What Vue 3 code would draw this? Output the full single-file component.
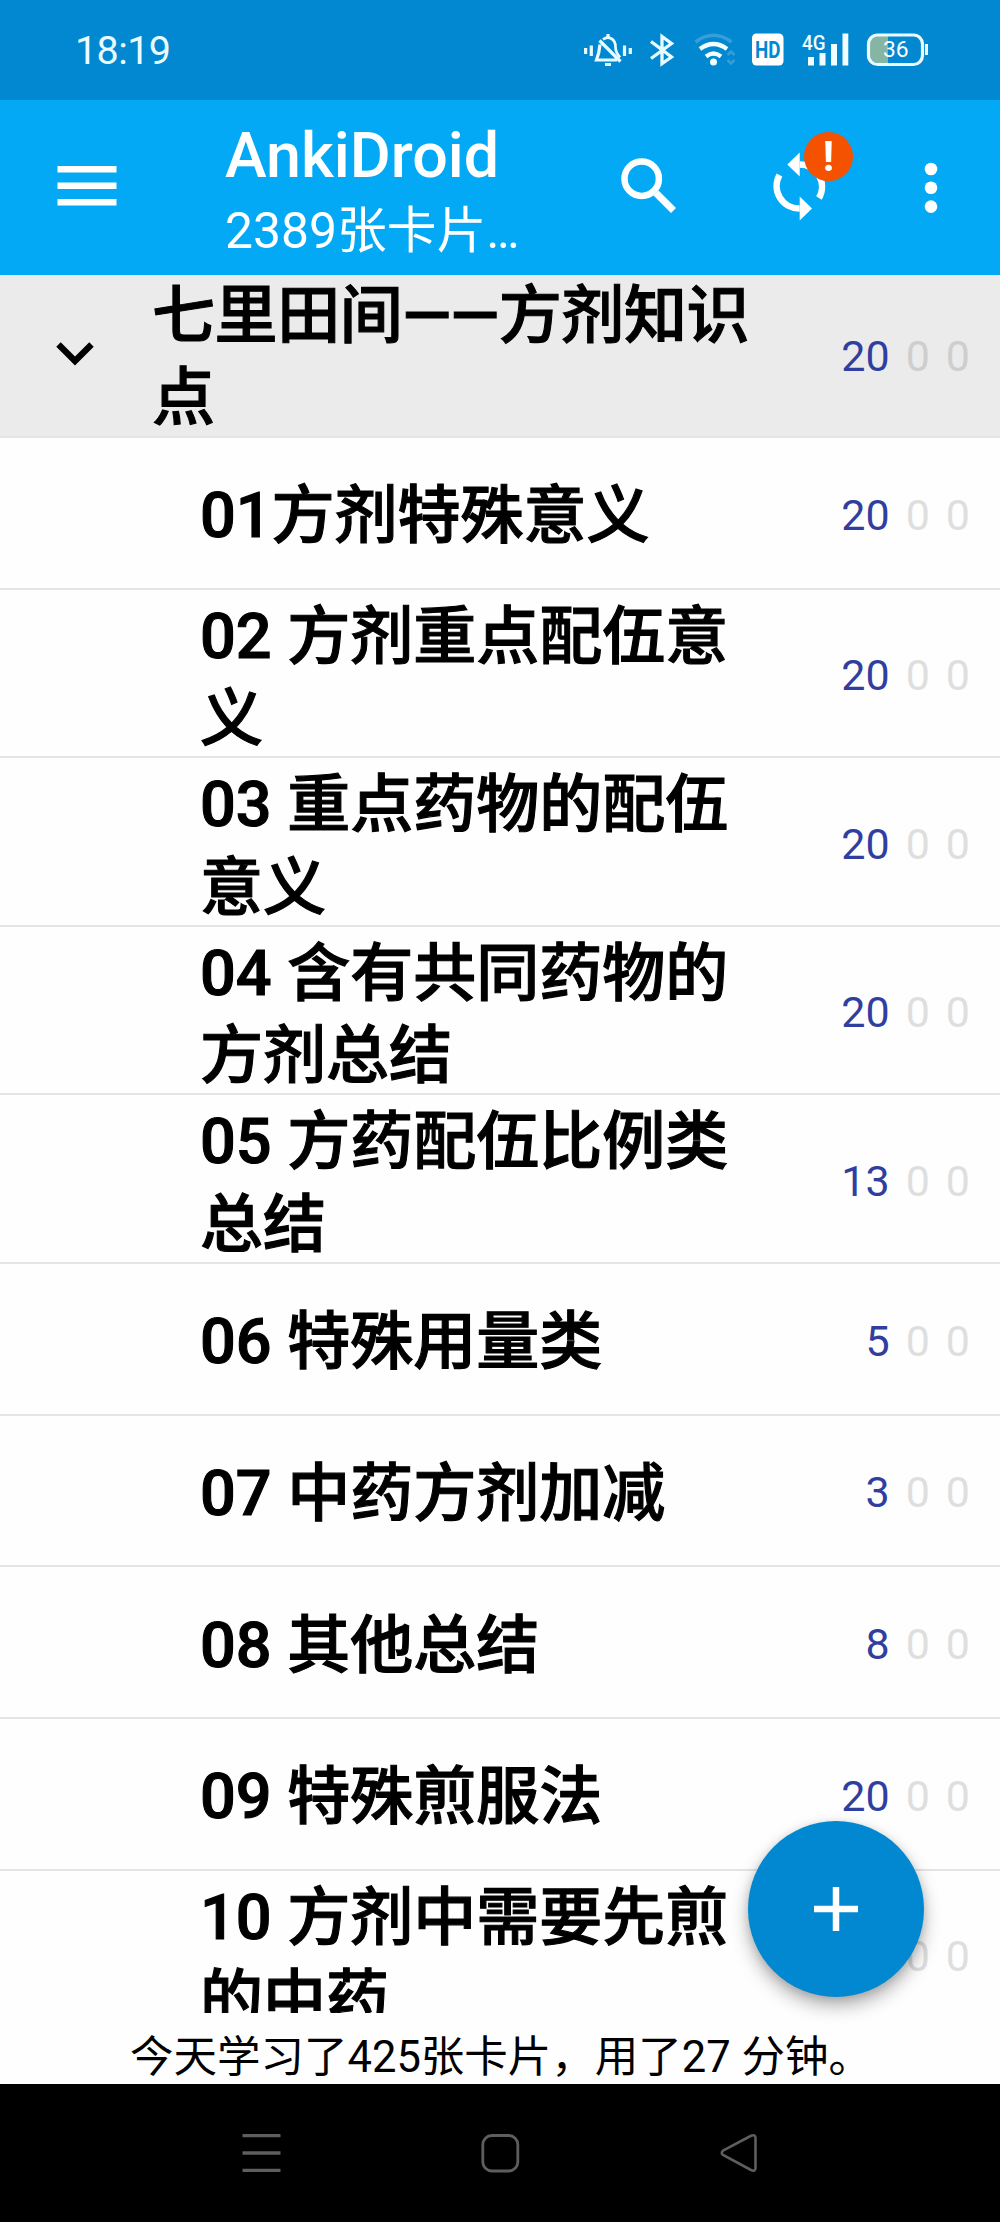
<template>
  <div class="screen">
    <div class="status-bar">
      <span class="clock">18:19</span>
      <div class="status-icons">
        <svg width="48" height="36" viewBox="584 32 48 36" fill="none" stroke="#e9fbff" stroke-width="3.2">
          <path d="M585.6 48v6M591.3 45.5v10.5M624.500 45.5v10.5M630.300 48v6" />
          <path d="M600 44.500C599.500 50 599 54 596.500 60H617M599.500 40.500L620.500 61.500" />
          <path d="M603 39.500C608 35.500 615.500 38.500 615.500 47C615.500 51 617 54 620 57.500" stroke-width="2.700" />
          <path d="M608 34v3M605 64.500h6" />
        </svg>
        <svg class="bluetooth" width="26" height="36" viewBox="649 32 26 36" fill="none" stroke="#e9fbff" stroke-width="3.300">
          <path d="M651 41.500L671.500 57L662 63.500V36.500L671.500 43.500L651 58.500" />
        </svg>
        <svg class="wifi" width="44" height="36" viewBox="694 32 44 36" fill="none" stroke="#f1fdff" stroke-width="4.200">
          <path d="M695.500 42Q713.500 28.500 731.500 42" stroke="#369edb" stroke-width="3.500" />
          <path d="M700 49Q713.500 39 727 49M706 56.500Q713.500 50.500 721 56.500" />
          <circle cx="713.500" cy="62" r="3.500" fill="#f1fdff" stroke="none" />
          <path d="M727.500 55l3.500-3.500l3.500 3.500M727.500 60l3.500 3.500l3.500-3.500" stroke="#369edb" stroke-width="2.600" />
        </svg>
        <svg class="hd" width="32" height="36" viewBox="752 32 32 36">
          <rect x="752" y="33.500" width="31.500" height="32" rx="4.500" fill="#fff" />
          <text x="755" y="57.500" textLength="25.500" lengthAdjust="spacingAndGlyphs" font-size="23" font-weight="700" fill="#0288d1">HD</text>
        </svg>
        <svg class="signal" width="48" height="36" viewBox="801 32 48 36" fill="#f1fdff">
          <text x="802" y="49.500" font-size="21" font-weight="500" textLength="23.500" lengthAdjust="spacingAndGlyphs">4G</text>
          <path d="M808 57h6v8.500h-6zM819.500 53h6v12.500h-6zM831 44h6v21.500h-6zM842.500 33.500h5.800v32h-5.800z" />
        </svg>
        <svg class="battery" width="62" height="36" viewBox="867 32 62 36">
          <path d="M888 36H878Q870 36 870 44V55Q870 63 878 63H888Z" fill="#86b5a4" />
          <rect x="868.500" y="35" width="54" height="29.500" rx="9" fill="none" stroke="#e9fbff" stroke-width="3.200" />
          <path d="M925 44h3v11h-3z" fill="#e9fbff" />
          <text x="883" y="56.700" font-size="22.800" fill="#fff">36</text>
        </svg>
      </div>
    </div>

    <header class="app-bar">
      <svg class="menu" width="60" height="42" viewBox="0 0 60 42" fill="#fff">
        <path d="M.5 1h59v6.500H.5zM.5 17.600h59v6.500H.5zM.5 34h59v6.500H.5z" />
      </svg>
      <div class="titles">
        <div class="title">AnkiDroid</div>
        <div class="subtitle">2389张卡片…</div>
      </div>
      <svg class="search" width="60" height="60" viewBox="618 156 60 60" fill="none" stroke="#fff">
        <circle cx="641.700" cy="178.700" r="17.200" stroke-width="6.500" />
        <path d="M656 193L673.500 210.500" stroke-width="7" />
      </svg>
      <div class="sync">
        <svg width="60" height="72" viewBox="770 150 60 72" fill="#fff">
          <path d="M779.500 175A22.500 22.500 0 0 0 799.700 208.500M799.700 164.500A22.300 22.300 0 0 1 819 198" fill="none" stroke="#fff" stroke-width="6.500" />
          <path d="M787.300 164.500L799.700 152.500V176.500zM812 208.500L799.700 196.500V220.500z" />
        </svg>
        <span class="badge">!</span>
      </div>
      <svg class="more" width="14" height="52" viewBox="0 0 14 52" fill="#fff">
        <circle v-for="y in [7, 25.8, 44.6]" :key="y" cx="7" :cy="y" r="6.300" />
      </svg>
    </header>

    <main class="deck-list">
      <div v-for="deck in decks" :key="deck.name" class="deck" :class="{ parent: deck.parent, tall: deck.tall }">
        <svg v-if="deck.parent" class="chevron" width="38" height="26" viewBox="0 0 38 26">
          <path d="M2.500 3.500L19 20L35.500 3.500" fill="none" stroke="#000" stroke-width="6.300" />
        </svg>
        <div class="deck-name">{{ deck.name }}</div>
        <div class="counts">
          <span class="new">{{ deck.count }}</span>
          <span>0</span>
          <span>0</span>
        </div>
      </div>
    </main>

    <footer class="summary">今天学习了425张卡片，用了27 分钟。</footer>

    <button class="fab">
      <svg width="44" height="44" viewBox="0 0 44 44">
        <path d="M22 0v44M0 22h44" stroke="#fff" stroke-width="6.500" />
      </svg>
    </button>

    <nav class="nav-bar">
      <svg width="40" height="40" viewBox="0 0 40 40" fill="none" stroke="#5e5e5e" stroke-width="3.300">
        <path d="M1.500 2.700h38M1.500 20h38M1.500 37.300h38" />
      </svg>
      <svg width="40" height="40" viewBox="0 0 40 40" fill="none" stroke="#5e5e5e" stroke-width="2.800">
        <rect x="2.800" y="2.500" width="35" height="35.500" rx="9" />
      </svg>
      <svg width="40" height="40" viewBox="0 0 40 40" fill="none" stroke="#5e5e5e" stroke-width="2.600">
        <path d="M4 17.700L32 2.800Q36.500 1 36.500 5V35Q36.500 39 32 37L4 22Q1.500 20 4 17.700Z" />
      </svg>
    </nav>
  </div>
</template>

<script setup>
import { ref } from 'vue';

const decks = ref([
  { name: '七里田间——方剂知识点', count: 20, parent: true },
  { name: '01方剂特殊意义', count: 20 },
  { name: '02 方剂重点配伍意义', count: 20, tall: true },
  { name: '03 重点药物的配伍意义', count: 20, tall: true },
  { name: '04 含有共同药物的方剂总结', count: 20, tall: true },
  { name: '05 方药配伍比例类总结', count: 13, tall: true },
  { name: '06 特殊用量类', count: 5 },
  { name: '07 中药方剂加减', count: 3 },
  { name: '08 其他总结', count: 8 },
  { name: '09 特殊煎服法', count: 20 },
  { name: '10 方剂中需要先煎的中药', count: 20, tall: true },
]);
</script>

<style>
body {
  margin: 0;
}
</style>

<style scoped>
.screen {
  position: relative;
  display: flex;
  flex-direction: column;
  width: 1000px;
  height: 2222px;
  overflow: hidden;
  background: #fefefe;
  color: #000;
  font-family: Roboto, "Noto Sans CJK SC", sans-serif;
}
svg {
  display: block;
  flex: none;
  overflow: visible;
}
.status-bar {
  display: flex;
  align-items: center;
  justify-content: space-between;
  box-sizing: border-box;
  height: 100px;
  padding: 0 71px 0 75px;
  background: #0288d1;
}
.clock {
  color: #e9fbff;
  font-size: 39.5px;
  letter-spacing: -0.6px;
}
.status-icons {
  display: flex;
}
.bluetooth {
  margin-left: 17px;
}
.wifi {
  margin-left: 19px;
}
.hd {
  margin-left: 14px;
}
.signal {
  margin-left: 17px;
}
.battery {
  margin-left: 18px;
}
.app-bar {
  display: flex;
  align-items: center;
  box-sizing: border-box;
  height: 175px;
  padding-left: 57px;
  background: #03a9f4;
  color: #fff;
}
.menu,
.search,
.sync {
  margin-bottom: 3px;
}
.titles {
  width: 393px;
  margin-left: 108px;
  padding-top: 14px;
  white-space: nowrap;
}
.title {
  font-size: 62.8px;
  font-weight: 500;
  line-height: 74px;
}
.subtitle {
  font-size: 49.8px;
  line-height: 77px;
}
.sync {
  position: relative;
  margin-left: 92px;
}
.badge {
  position: absolute;
  top: -18px;
  left: 34px;
  width: 49px;
  height: 49px;
  border-radius: 50%;
  background: #f45100;
  font-size: 42px;
  font-weight: 700;
  line-height: 49px;
  text-align: center;
}
.more {
  margin-left: 94px;
}
.deck-list {
  height: 1738px;
  overflow: hidden;
}
.deck {
  display: flex;
  align-items: center;
  box-sizing: border-box;
  height: 151.8px;
  padding: 4px 30px 0 200px;
  border-bottom: 2px solid #e4e4e4;
}
.tall {
  height: 168.5px;
}
.parent {
  height: 163px;
  padding: 0 30px 0 56px;
  background: #ebebeb;
}
.chevron {
  margin: 0 58px 4px 0;
}
.deck-name {
  width: 560px;
  padding-top: 3px;
  font-size: 63px;
  font-weight: 500;
  line-height: 82.4px;
  -webkit-text-stroke: 1.1px #000;
}
.tall .deck-name {
  margin-bottom: -3px;
}
.parent .deck-name {
  width: 610px;
  letter-spacing: -0.4px;
}
.counts {
  display: flex;
  gap: 16px;
  margin-left: auto;
  color: #dedede;
  font-size: 43px;
}
.parent .counts {
  color: #cecece;
}
.counts .new {
  color: #303f9f;
}
.summary {
  height: 71px;
  padding-left: 130px;
  font-size: 43.5px;
  line-height: 90px;
  white-space: nowrap;
}
.fab {
  position: absolute;
  top: 1821px;
  left: 748px;
  display: flex;
  align-items: center;
  justify-content: center;
  width: 176px;
  height: 176px;
  padding: 0;
  border: none;
  border-radius: 50%;
  background: #0288d1;
  box-shadow: 0 9px 18px rgba(0, 0, 0, 0.3), 0 2px 8px rgba(0, 0, 0, 0.12);
}
.nav-bar {
  display: flex;
  align-items: flex-start;
  justify-content: space-between;
  box-sizing: border-box;
  height: 138px;
  padding: 49px 241px;
  background: #000;
}
</style>
